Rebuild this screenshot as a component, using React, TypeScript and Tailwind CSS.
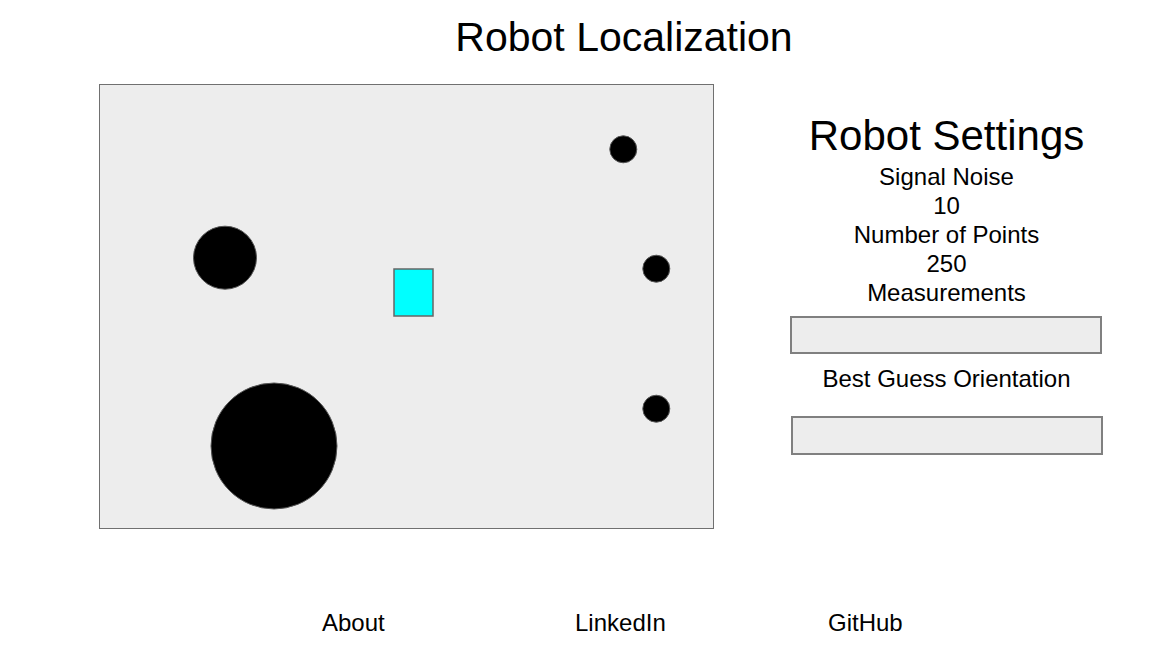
const font = { fontFamily: '"Liberation Sans", Arial, sans-serif' };

type Obstacle = { cx: number; cy: number; r: number };

// landmark positions inside the world canvas (inner coords)
const obstacles: Obstacle[] = [
  { cx: 125, cy: 172.7, r: 31.5 },
  { cx: 174, cy: 361, r: 63 },
  { cx: 523.3, cy: 64.3, r: 13.5 },
  { cx: 556.3, cy: 183.7, r: 13.5 },
  { cx: 556.3, cy: 323.7, r: 13.5 },
];

function World() {
  return (
    <div className="w-[615px] h-[445px] border border-[#707070] bg-[#ededed] shrink-0">
      <svg width="613" height="443" viewBox="0 0 613 443">
        {obstacles.map((o, i) => (
          <circle key={i} cx={o.cx} cy={o.cy} r={o.r} fill="#000" stroke="#555" strokeWidth="1" />
        ))}
        <rect x="294" y="184" width="39" height="47" fill="#00ffff" stroke="#666" strokeWidth="1.5" />
      </svg>
    </div>
  );
}

function Settings() {
  return (
    <div className="flex flex-col items-center w-[313px] pt-[31px] text-black">
      <h2 className="text-[42px] leading-[41px] whitespace-nowrap">Robot Settings</h2>
      <div className="mt-[6px] flex flex-col items-center text-[24px] leading-[29px]">
        <span>Signal Noise</span>
        <span>10</span>
        <span>Number of Points</span>
        <span>250</span>
        <span>Measurements</span>
      </div>
      <div className="mt-[9px] w-[312px] h-[38px] border-2 border-[#808080] bg-[#ededed] self-start" />
      <div className="mt-[10px] text-[24px] leading-[29px]">Best Guess Orientation</div>
      <div className="mt-[23px] ml-[1px] w-[312px] h-[39px] border-2 border-[#808080] bg-[#ededed] self-start" />
    </div>
  );
}

export default function App() {
  return (
    <div className="w-[1152px] h-[670px] bg-white text-black overflow-hidden" style={font}>
      <div className="pl-[96px] pt-[17px] flex justify-center">
        <h1 className="text-[41px] leading-[41px] whitespace-nowrap">Robot Localization</h1>
      </div>

      <div className="flex mt-[26px] pl-[99px] gap-[76px]">
        <World />
        <Settings />
      </div>

      <nav className="flex mt-[79px] pl-[322px] text-[24px] leading-[29px]">
        <a className="w-[253px]">About</a>
        <a className="w-[253px]">LinkedIn</a>
        <a className="w-[253px]">GitHub</a>
      </nav>
    </div>
  );
}
